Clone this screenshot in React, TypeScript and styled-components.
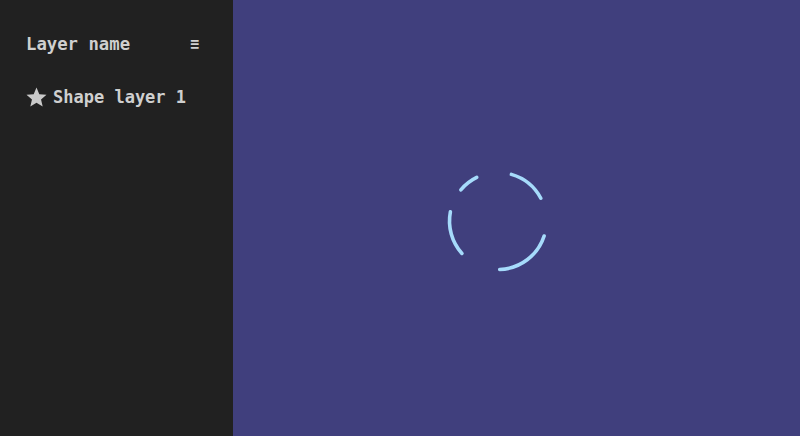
import styled, { createGlobalStyle } from 'styled-components'

const GlobalStyle = createGlobalStyle`
  html, body, #root {
    margin: 0;
    padding: 0;
    height: 100%;
  }
  body {
    font-family: "DejaVu Sans Mono", "Liberation Mono", monospace;
  }
`

const layers = [{ id: 1, name: 'Shape layer 1' }]

// angles in degrees, clockwise from 3 o'clock
const arcs: Array<[number, number]> = [
  [220, 244],
  [286, 332],
  [18, 88],
  [138, 191]
]

const arcPath = (from: number, to: number, r: number, c: number): string => {
  const rad = (a: number) => (a * Math.PI) / 180
  const x1 = c + r * Math.cos(rad(from))
  const y1 = c + r * Math.sin(rad(from))
  const x2 = c + r * Math.cos(rad(to))
  const y2 = c + r * Math.sin(rad(to))
  return `M ${x1} ${y1} A ${r} ${r} 0 0 1 ${x2} ${y2}`
}

const StarIcon = (): JSX.Element => (
  <svg width="21" height="20" viewBox="1.5 1.5 21 20">
    <path fill="#c9c9c9" d="M12 17.27 18.18 21l-1.64-7.03L22 9.24l-7.19-.61L12 2 9.19 8.63 2 9.24l5.46 4.73L5.82 21z" />
  </svg>
)

const Spinner = (): JSX.Element => (
  <svg width="110" height="110" viewBox="0 0 110 110">
    {arcs.map(([a, b], i) => (
      <path key={i} d={arcPath(a, b, 48.5, 55)} fill="none" stroke="#a6dbfb" strokeWidth="3.6" strokeLinecap="round" />
    ))}
  </svg>
)

export default function App (): JSX.Element {
  return (
    <>
      <GlobalStyle />
      <Page>
        <Sidebar>
          <Header>
            <HeaderTitle>Layer name</HeaderTitle>
            <MenuGlyph>≡</MenuGlyph>
          </Header>
          <LayerList>
            {layers.map(layer => (
              <LayerRow key={layer.id}>
                <StarIcon />
                <LayerName>{layer.name}</LayerName>
              </LayerRow>
            ))}
          </LayerList>
        </Sidebar>
        <Canvas>
          <Spinner />
        </Canvas>
      </Page>
    </>
  )
}

const Page = styled.div`
  display: flex;
  width: 800px;
  height: 436px;
`

const Sidebar = styled.aside`
  width: 233px;
  flex-shrink: 0;
  background-color: #212121;
  padding: 32px 26px;
  box-sizing: border-box;
  display: flex;
  flex-direction: column;
  gap: 29px;
`

const Header = styled.div`
  display: flex;
  align-items: center;
  justify-content: space-between;
  padding-right: 8px;
`

const HeaderTitle = styled.h2`
  margin: 0;
  font-size: 17.3px;
  font-weight: bold;
  color: #cfcfcf;
  line-height: 24px;
`

const MenuGlyph = styled.span`
  font-size: 15px;
  font-weight: bold;
  color: #d0d0d0;
  line-height: 24px;
`

const LayerList = styled.ul`
  list-style: none;
  margin: 0;
  padding: 0;
`

const LayerRow = styled.li`
  display: flex;
  align-items: center;
  gap: 6px;
`

const LayerName = styled.span`
  font-size: 17px;
  font-weight: bold;
  color: #cfcfcf;
  line-height: 24px;
`

const Canvas = styled.main`
  flex: 1;
  background-color: #403f7d;
  display: flex;
  align-items: center;
  justify-content: center;
  padding: 6px 37px 0 0;
`
